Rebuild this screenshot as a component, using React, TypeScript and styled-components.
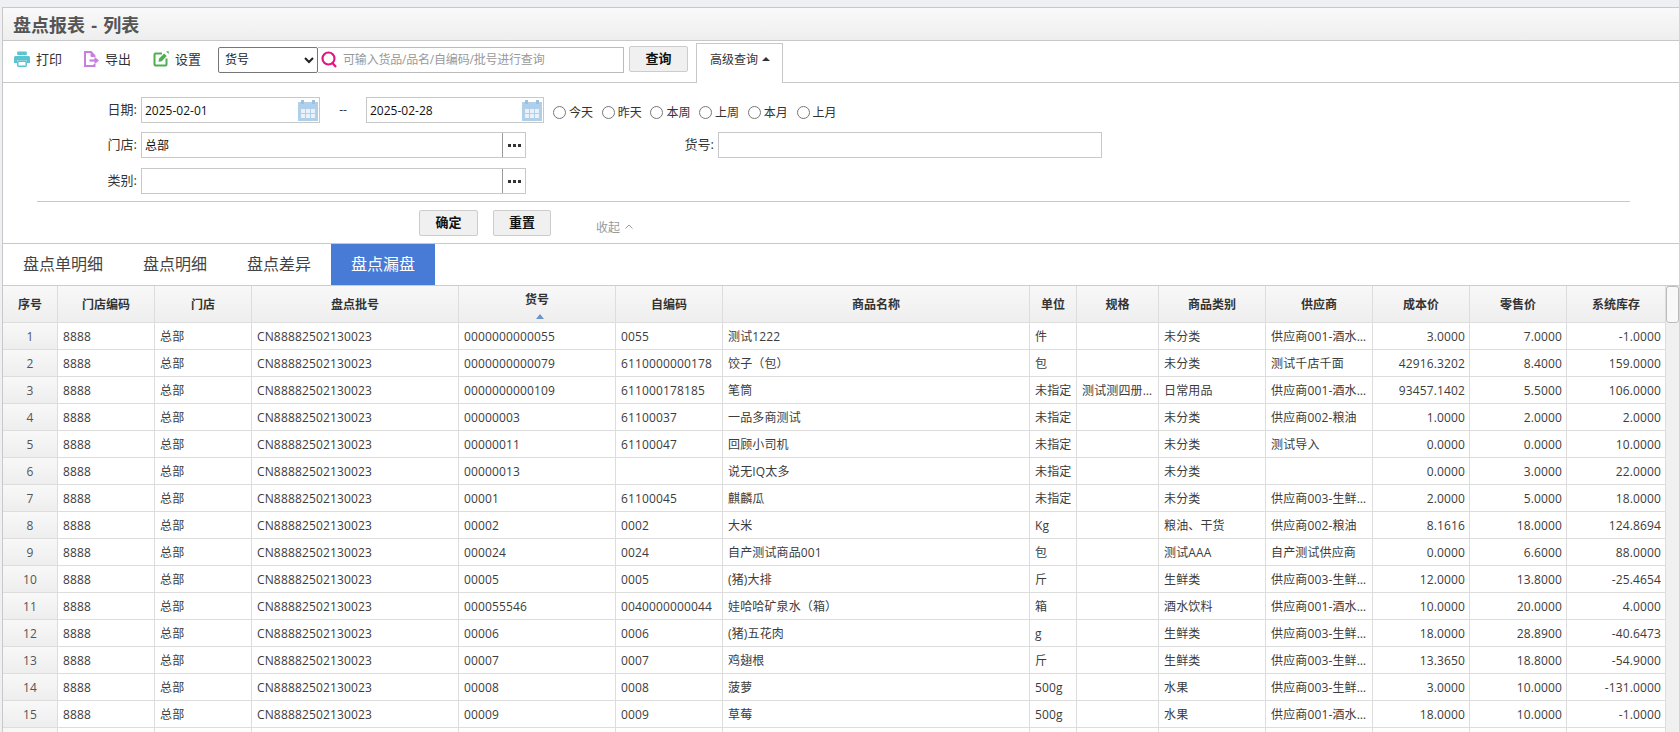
import React from 'react'
import styled, { createGlobalStyle } from 'styled-components'

const FONT = '"Open Sans", "Noto Sans CJK SC", sans-serif'

const GlobalStyle = createGlobalStyle`
  html, body {
    margin: 0;
    height: 732px;
    overflow: hidden;
    background: #eef0f4;
    font-family: ${FONT};
    font-size: 12px;
    color: #333;
  }
  * { box-sizing: border-box; }
`

const Page = styled.div`
  height: 732px;
  padding: 7px 0 0 2px;
`

const Panel = styled.div`
  height: 725px;
  display: flex;
  flex-direction: column;
  background: #fff;
  border-top: 1px solid #c8c8c8;
  border-left: 1px solid #c8c8c8;
  overflow: hidden;
`

const TitleBar = styled.div`
  flex: none;
  height: 33px;
  padding-left: 10px;
  line-height: 35px;
  font-size: 18px;
  font-weight: 700;
  word-spacing: 1.5px;
  color: #555;
  background: linear-gradient(#f9f9f9, #eeeeee);
  border-bottom: 1px solid #c8c8c8;
`

const Toolbar = styled.div`
  flex: none;
  height: 42px;
  display: flex;
  align-items: center;
  padding: 0 0 4px 11px;
  border-bottom: 1px solid #c8c8c8;
`

const ToolButton = styled.a<{ $gap: number }>`
  display: flex;
  align-items: center;
  gap: ${p => p.$gap}px;
  margin: -2px 22px 0 0;
  font-size: 13px;
  color: #333;
  cursor: pointer;
  svg { display: block; }
`

const QuerySelect = styled.select`
  width: 100px;
  height: 26px;
  margin-left: -5px;
  padding: 0 0 0 2px;
  font-family: ${FONT};
  font-size: 12px;
  color: #222;
  background: #fff;
  border: 1px solid #767676;
  border-radius: 2px;
`

const SearchBox = styled.div`
  width: 306px;
  height: 26px;
  display: flex;
  align-items: center;
  gap: 6px;
  padding-left: 3px;
  border: 1px solid #bbb;
  border-left: 0;
`

const SearchInput = styled.input`
  flex: 1;
  min-width: 0;
  border: 0;
  outline: 0;
  padding: 0;
  font-family: ${FONT};
  font-size: 12px;
  letter-spacing: -0.2px;
  &::placeholder { color: #999; opacity: 1; }
`

const GrayButton = styled.button<{ $width: number }>`
  width: ${p => p.$width}px;
  height: 26px;
  padding: 0 0 3px;
  font-family: ${FONT};
  font-size: 13px;
  font-weight: 700;
  color: #111;
  background: #f0f0f0;
  border: 1px solid #ccc;
  border-radius: 2px;
`

const QueryButton = styled(GrayButton)`
  margin: -2px 0 0 5px;
`

const AdvancedTab = styled.div`
  align-self: flex-end;
  height: 40px;
  width: 87px;
  margin: 0 0 -5px 8px;
  padding: 0 0 9px 13px;
  display: flex;
  align-items: center;
  gap: 4px;
  color: #333;
  background: #fff;
  border: 1px solid #c8c8c8;
  border-bottom: 0;
`

const CaretUp = styled.span`
  width: 0;
  height: 0;
  border-left: 4px solid transparent;
  border-right: 4px solid transparent;
  border-bottom: 4px solid #333;
`

const FilterForm = styled.div`
  flex: none;
  padding-top: 14px;
  border-bottom: 1px solid #c8c8c8;
`

const FormRows = styled.div`
  display: grid;
  grid-template-rows: 35px 36px 26px;
`

const FormRow = styled.div`
  display: flex;
  align-items: flex-start;
`

const FieldLabel = styled.label<{ $width: number }>`
  width: ${p => p.$width}px;
  margin-right: 4px;
  line-height: 24px;
  font-size: 13px;
  text-align: right;
  color: #333;
`

const Field = styled.div<{ $width: number }>`
  width: ${p => p.$width}px;
  height: 26px;
  display: flex;
  align-items: center;
  background: #fff;
  border: 1px solid #c8c8c8;
`

const FieldInput = styled.input`
  flex: 1;
  min-width: 0;
  height: 100%;
  padding: 0 0 0 3px;
  border: 0;
  outline: 0;
  font-family: ${FONT};
  font-size: 12px;
  color: #111;
`

const CalendarIcon = styled.svg`
  flex: none;
  margin-right: 1px;
`

const PickButton = styled.div`
  flex: none;
  width: 23px;
  height: 24px;
  display: flex;
  align-items: center;
  justify-content: center;
  border-left: 1px solid #999;
`

const RangeDash = styled.span`
  width: 46px;
  line-height: 26px;
  text-align: center;
  color: #333;
`

const RadioGroup = styled.div`
  display: flex;
  gap: 8.7px;
  margin: 6px 0 0 9px;
`

const RadioItem = styled.label`
  display: flex;
  align-items: center;
  gap: 3px;
  color: #333;
  input { margin: 0; width: 13px; height: 13px; }
`

const Divider = styled.div`
  height: 1px;
  margin: 7px 49px 0 34px;
  background: #c8c8c8;
`

const ActionRow = styled.div`
  display: flex;
  gap: 15px;
  padding: 8px 0 7px 416px;
`

const CollapseLink = styled.a`
  display: flex;
  align-items: center;
  gap: 5px;
  margin: 7px 0 0 30px;
  color: #999;
  cursor: pointer;
`

const TabBar = styled.div`
  flex: none;
  height: 41px;
  display: flex;
`

const Tab = styled.div<{ $active?: boolean }>`
  padding: 0 20px;
  line-height: 41px;
  font-size: 16px;
  color: ${p => (p.$active ? '#fff' : '#444')};
  background: ${p => (p.$active ? '#477bd6' : 'transparent')};
`

const GridArea = styled.div`
  flex: 1;
  min-height: 0;
  display: flex;
  border-top: 1px solid #ccc;
  overflow: hidden;
`

const DataTable = styled.table`
  flex: none;
  width: 1663px;
  height: fit-content;
  table-layout: fixed;
  border-collapse: separate;
  border-spacing: 0;
`

const HeadCell = styled.th`
  height: 37px;
  padding: 0;
  font-size: 12px;
  font-weight: 700;
  color: #333;
  text-align: center;
  background: linear-gradient(#f8f8f8, #eeeeee);
  border-right: 1px solid #ddd;
  border-bottom: 1px solid #ddd;
`

const SortMark = styled.span`
  display: block;
  width: 0;
  height: 0;
  margin: 6px auto 0;
  transform: translateX(3px);
  border-left: 4px solid transparent;
  border-right: 4px solid transparent;
  border-bottom: 5px solid #6a94cc;
`

const BodyCell = styled.td<{ $right?: boolean }>`
  height: 27px;
  padding: ${p => (p.$right ? '0 4px 0 0' : '0 3px 0 5px')};
  font-size: 12px;
  letter-spacing: 0.14px;
  color: #3c3c3c;
  text-align: ${p => (p.$right ? 'right' : 'left')};
  white-space: nowrap;
  overflow: hidden;
  text-overflow: ellipsis;
  border-right: 1px solid #ddd;
  border-bottom: 1px solid #ddd;
`

const IndexCell = styled(BodyCell)`
  padding: 0;
  text-align: center;
  color: #555;
  background: linear-gradient(#f8f8f8, #eeeeee);
`

const ScrollTrack = styled.div`
  flex: 1;
  background: #f0f0f0;
`

const ScrollThumb = styled.div`
  height: 37px;
  background: #f8f8f8;
  border: 1px solid #bbb;
  border-radius: 3px;
`

const columns = [
  { title: '序号', width: 55 },
  { title: '门店编码', width: 97 },
  { title: '门店', width: 97 },
  { title: '盘点批号', width: 207 },
  { title: '货号', width: 157, sorted: true },
  { title: '自编码', width: 107 },
  { title: '商品名称', width: 307 },
  { title: '单位', width: 47 },
  { title: '规格', width: 82 },
  { title: '商品类别', width: 107 },
  { title: '供应商', width: 107 },
  { title: '成本价', width: 97, right: true },
  { title: '零售价', width: 97, right: true },
  { title: '系统库存', width: 99, right: true },
]

const S1 = '供应商001-酒水饮料'
const S2 = '供应商002-粮油'
const S3 = '供应商003-生鲜水果'

// 货号, 自编码, 名称, 单位, 规格, 类别, 供应商, 成本, 零售, 库存
const rows: string[][] = [
  ['0000000000055', '0055', '测试1222', '件', '', '未分类', S1, '3.0000', '7.0000', '-1.0000'],
  ['0000000000079', '6110000000178', '饺子（包）', '包', '', '未分类', '测试千店千面', '42916.3202', '8.4000', '159.0000'],
  ['0000000000109', '611000178185', '笔筒', '未指定', '测试测四册规格', '日常用品', S1, '93457.1402', '5.5000', '106.0000'],
  ['00000003', '61100037', '一品多商测试', '未指定', '', '未分类', S2, '1.0000', '2.0000', '2.0000'],
  ['00000011', '61100047', '回顾小司机', '未指定', '', '未分类', '测试导入', '0.0000', '0.0000', '10.0000'],
  ['00000013', '', '说无IQ太多', '未指定', '', '未分类', '', '0.0000', '3.0000', '22.0000'],
  ['00001', '61100045', '麒麟瓜', '未指定', '', '未分类', S3, '2.0000', '5.0000', '18.0000'],
  ['00002', '0002', '大米', 'Kg', '', '粮油、干货', S2, '8.1616', '18.0000', '124.8694'],
  ['000024', '0024', '自产测试商品001', '包', '', '测试AAA', '自产测试供应商', '0.0000', '6.6000', '88.0000'],
  ['00005', '0005', '(猪)大排', '斤', '', '生鲜类', S3, '12.0000', '13.8000', '-25.4654'],
  ['000055546', '0040000000044', '娃哈哈矿泉水（箱）', '箱', '', '酒水饮料', S1, '10.0000', '20.0000', '4.0000'],
  ['00006', '0006', '(猪)五花肉', 'g', '', '生鲜类', S3, '18.0000', '28.8900', '-40.6473'],
  ['00007', '0007', '鸡翅根', '斤', '', '生鲜类', S3, '13.3650', '18.8000', '-54.9000'],
  ['00008', '0008', '菠萝', '500g', '', '水果', S3, '3.0000', '10.0000', '-131.0000'],
  ['00009', '0009', '草莓', '500g', '', '水果', S1, '18.0000', '10.0000', '-1.0000'],
]

function PrintIcon() {
  return (
    <svg width="16" height="16" viewBox="0 0 16 16">
      <path fill="#5bc4d1" d="M4 .5h8a.8.8 0 0 1 .8.8V4H3.200V1.300A.8.8 0 0 1 4 .5z" />
      <path
        fill="#5bc4d1"
        fillRule="evenodd"
        d="M1.500 5h13A1.500 1.500 0 0 1 16 6.500V12h-3v-2.500H3V12H0V6.500A1.500 1.500 0 0 1 1.500 5z"
      />
      <rect x="3.800" y="10.200" width="8.400" height="5" rx=".6" fill="#fff" stroke="#5bc4d1" strokeWidth="1.500" />
    </svg>
  )
}

function ExportIcon() {
  return (
    <svg width="15" height="16" viewBox="0 0 15 16" fill="none" stroke="#c97fdd">
      <path strokeWidth="2" d="M10.500 6V5L7 1H1v14h9.500v-2" />
      <path strokeWidth="1" fill="#c97fdd" d="M7 1.500V5.500h3.500z" />
      <path strokeWidth="2.200" d="M5.500 9.500h7" />
      <path fill="#c97fdd" stroke="none" d="M10.500 5.800L15 9.500l-4.500 3.700z" />
    </svg>
  )
}

function SettingIcon() {
  return (
    <svg width="16" height="16" viewBox="0 0 16 16" fill="none">
      <path stroke="#4caf50" strokeWidth="2" d="M9 2.500H2.500a1 1 0 0 0-1 1v10a1 1 0 0 0 1 1h10a1 1 0 0 0 1-1V7.500" />
      <path fill="#4caf50" d="M5.500 10.800l.6-3.200L11.200 2.600l2.500 2.500-5 5.100z" />
      <path fill="#4caf50" d="M13 .3h2.700V3z" />
    </svg>
  )
}

function SearchIcon() {
  return (
    <svg width="16" height="17" viewBox="0 0 16 17" fill="none" stroke="#e3177f" strokeWidth="2.200" style={{ flex: 'none' }}>
      <circle cx="7.500" cy="7.500" r="6" />
      <path d="M11.500 12l3.500 4" />
    </svg>
  )
}

function Calendar() {
  const cells = [0, 1, 2].flatMap(c => [0, 1].map(r => ({ c, r })))
  return (
    <CalendarIcon width="20" height="21" viewBox="0 0 20 21">
      <rect x="0" y="2" width="20" height="19" fill="#b0d0ea" />
      <rect x="3" y="0" width="3" height="4" fill="#9cc2e2" />
      <rect x="14" y="0" width="3" height="4" fill="#9cc2e2" />
      {cells.map(({ c, r }) => (
        <rect key={`${c}-${r}`} x={3 + c * 5} y={9 + r * 5} width="4" height="4" fill="#e9f2fa" />
      ))}
    </CalendarIcon>
  )
}

function DotsIcon() {
  return (
    <svg width="13" height="3" viewBox="0 0 13 3" fill="#333">
      <rect x="0" width="3" height="3" />
      <rect x="5" width="3" height="3" />
      <rect x="10" width="3" height="3" />
    </svg>
  )
}

function ChevronUp() {
  return (
    <svg width="8" height="5" viewBox="0 0 8 5" fill="none" stroke="#999">
      <path d="M.5 4.500L4 1l3.500 3.500" />
    </svg>
  )
}

function PickField({ value }: { value?: string }) {
  return (
    <Field $width={385}>
      <FieldInput defaultValue={value} />
      <PickButton>
        <DotsIcon />
      </PickButton>
    </Field>
  )
}

export default function App() {
  return (
    <Page>
      <GlobalStyle />
      <Panel>
        <TitleBar>盘点报表 - 列表</TitleBar>

        <Toolbar>
          <ToolButton $gap={6}>
            <PrintIcon />
            打印
          </ToolButton>
          <ToolButton $gap={6}>
            <ExportIcon />
            导出
          </ToolButton>
          <ToolButton $gap={6}>
            <SettingIcon />
            设置
          </ToolButton>
          <QuerySelect defaultValue="货号">
            <option>货号</option>
            <option>品名</option>
          </QuerySelect>
          <SearchBox>
            <SearchIcon />
            <SearchInput placeholder="可输入货品/品名/自编码/批号进行查询" />
          </SearchBox>
          <QueryButton $width={59}>查询</QueryButton>
          <AdvancedTab>
            高级查询
            <CaretUp />
          </AdvancedTab>
        </Toolbar>

        <FilterForm>
          <FormRows>
            <FormRow>
              <FieldLabel $width={134}>日期:</FieldLabel>
              <Field $width={179}>
                <FieldInput defaultValue="2025-02-01" />
                <Calendar />
              </Field>
              <RangeDash>--</RangeDash>
              <Field $width={178}>
                <FieldInput defaultValue="2025-02-28" />
                <Calendar />
              </Field>
              <RadioGroup>
                {['今天', '昨天', '本周', '上周', '本月', '上月'].map(name => (
                  <RadioItem key={name}>
                    <input type="radio" name="range" />
                    {name}
                  </RadioItem>
                ))}
              </RadioGroup>
            </FormRow>
            <FormRow>
              <FieldLabel $width={134}>门店:</FieldLabel>
              <PickField value="总部" />
              <FieldLabel $width={188}>货号:</FieldLabel>
              <Field $width={384}>
                <FieldInput />
              </Field>
            </FormRow>
            <FormRow>
              <FieldLabel $width={134}>类别:</FieldLabel>
              <PickField />
            </FormRow>
          </FormRows>
          <Divider />
          <ActionRow>
            <GrayButton $width={59}>确定</GrayButton>
            <GrayButton $width={58}>重置</GrayButton>
            <CollapseLink>
              收起
              <ChevronUp />
            </CollapseLink>
          </ActionRow>
        </FilterForm>

        <TabBar>
          <Tab>盘点单明细</Tab>
          <Tab>盘点明细</Tab>
          <Tab>盘点差异</Tab>
          <Tab $active>盘点漏盘</Tab>
        </TabBar>

        <GridArea>
          <DataTable>
            <colgroup>
              {columns.map(col => (
                <col key={col.title} width={col.width} />
              ))}
            </colgroup>
            <thead>
              <tr>
                {columns.map(col => (
                  <HeadCell key={col.title}>
                    {col.title}
                    {col.sorted && <SortMark />}
                  </HeadCell>
                ))}
              </tr>
            </thead>
            <tbody>
              {rows.map((row, i) => (
                <tr key={i}>
                  <IndexCell>{i + 1}</IndexCell>
                  <BodyCell>8888</BodyCell>
                  <BodyCell>总部</BodyCell>
                  <BodyCell>CN88882502130023</BodyCell>
                  {row.map((text, j) => (
                    <BodyCell key={j} $right={columns[j + 4].right}>
                      {text}
                    </BodyCell>
                  ))}
                </tr>
              ))}
              <tr>
                {columns.map((col, j) =>
                  j === 0 ? <IndexCell key={col.title} /> : <BodyCell key={col.title} />
                )}
              </tr>
            </tbody>
          </DataTable>
          <ScrollTrack>
            <ScrollThumb />
          </ScrollTrack>
        </GridArea>
      </Panel>
    </Page>
  )
}
